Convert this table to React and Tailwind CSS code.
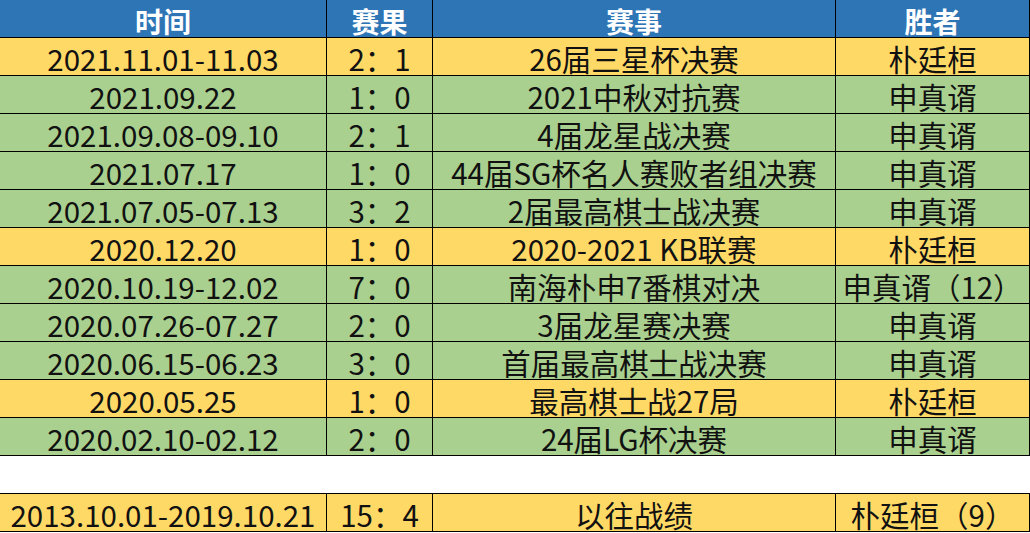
const rows = [
  { date: "2021.11.01-11.03", score: "2：1", event: "26届三星杯决赛", winner: "朴廷桓", tone: "yellow" },
  { date: "2021.09.22", score: "1：0", event: "2021中秋对抗赛", winner: "申真谞", tone: "green" },
  { date: "2021.09.08-09.10", score: "2：1", event: "4届龙星战决赛", winner: "申真谞", tone: "green" },
  { date: "2021.07.17", score: "1：0", event: "44届SG杯名人赛败者组决赛", winner: "申真谞", tone: "green" },
  { date: "2021.07.05-07.13", score: "3：2", event: "2届最高棋士战决赛", winner: "申真谞", tone: "green" },
  { date: "2020.12.20", score: "1：0", event: "2020-2021 KB联赛", winner: "朴廷桓", tone: "yellow" },
  { date: "2020.10.19-12.02", score: "7：0", event: "南海朴申7番棋对决", winner: "申真谞（12）", tone: "green" },
  { date: "2020.07.26-07.27", score: "2：0", event: "3届龙星赛决赛", winner: "申真谞", tone: "green" },
  { date: "2020.06.15-06.23", score: "3：0", event: "首届最高棋士战决赛", winner: "申真谞", tone: "green" },
  { date: "2020.05.25", score: "1：0", event: "最高棋士战27局", winner: "朴廷桓", tone: "yellow" },
  { date: "2020.02.10-02.12", score: "2：0", event: "24届LG杯决赛", winner: "申真谞", tone: "green" },
];

const total = { date: "2013.10.01-2019.10.21", score: "15：4", event: "以往战绩", winner: "朴廷桓（9）", tone: "yellow" };

function Row({ row }) {
  const bg = row.tone === "yellow" ? "bg-[#ffd966]" : "bg-[#a9d08e]";
  return (
    <div className={`grid grid-cols-[327px_106px_403px_194px] h-[38px] border-b border-black ${bg}`}>
      <div className="flex items-center justify-center pt-[4px] border-r border-black whitespace-nowrap">{row.date}</div>
      <div className="flex items-center justify-center pt-[4px] border-r border-black whitespace-nowrap">{row.score}</div>
      <div className="flex items-center justify-center pt-[4px] border-r border-black whitespace-nowrap">{row.event}</div>
      <div className="flex items-center justify-center pt-[4px] border-r border-black whitespace-nowrap">{row.winner}</div>
    </div>
  );
}

export default function App() {
  return (
    <div className="w-[1030px] h-[533px] bg-white text-[29.5px] leading-none text-[#111] font-['Noto_Sans_CJK_SC','Noto_Sans',sans-serif]">
      {/* 表头 */}
      <div className="grid grid-cols-[327px_106px_403px_194px] h-[38px] border-b border-black bg-[#2e75b6] text-white text-[28px] font-bold">
        <div className="flex items-center justify-center pt-[4px] border-r border-black">时间</div>
        <div className="flex items-center justify-center pt-[4px] border-r border-black">赛果</div>
        <div className="flex items-center justify-center pt-[4px] border-r border-black">赛事</div>
        <div className="flex items-center justify-center pt-[4px] border-r border-black">胜者</div>
      </div>

      {rows.map((row) => (
        <Row key={row.date} row={row} />
      ))}

      {/* 空行 */}
      <div className="h-[38px] border-b border-black bg-white" />

      <Row row={total} />
    </div>
  );
}
